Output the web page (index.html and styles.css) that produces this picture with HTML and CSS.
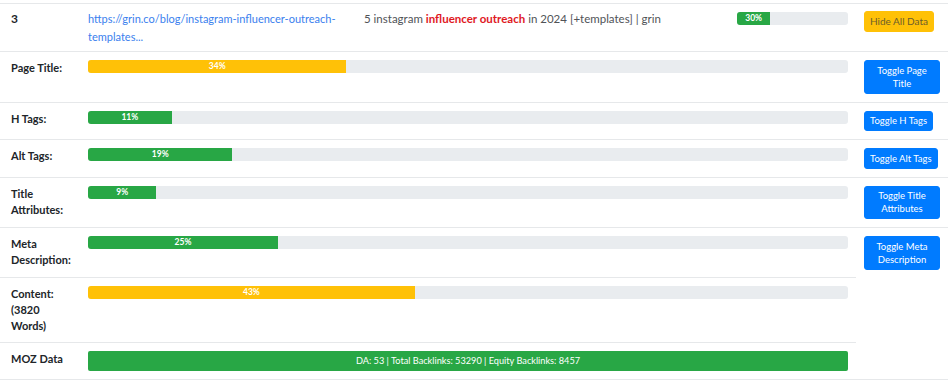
FILE: index.html
```html
<!DOCTYPE html>
<html lang="en">
    <head>
        <meta charset="UTF-8">
        <meta name="viewport" content="width=device-width, initial-scale=1.0">
        <title>Page audit</title>
        <link rel="stylesheet" href="styles.css">
    </head>
    <body>
        <div class="wrap">
            <table class="audit">
                <colgroup>
                    <col class="c-num">
                    <col class="c-url">
                    <col class="c-title">
                    <col class="c-score">
                    <col class="c-act">
                </colgroup>
                <tr class="result">
                    <td class="num">3</td>
                    <td><a class="url" href="#">https://grin.co/blog/instagram-influencer-outreach-templates...</a></td>
                    <td class="title">5 instagram <b>influencer outreach</b> in 2024 [+templates] | grin</td>
                    <td><div class="track"><div class="fill ok" style="width:30%">30%</div></div></td>
                    <td><button class="btn btn-warn">Hide All Data</button></td>
                </tr>
                <tr>
                    <th>Page Title:</th>
                    <td colspan="3"><div class="track"><div class="fill warn" style="width:34%">34%</div></div></td>
                    <td><button class="btn">Toggle Page Title</button></td>
                </tr>
                <tr>
                    <th>H Tags:</th>
                    <td colspan="3"><div class="track"><div class="fill ok" style="width:11%">11%</div></div></td>
                    <td><button class="btn">Toggle H Tags</button></td>
                </tr>
                <tr>
                    <th>Alt Tags:</th>
                    <td colspan="3"><div class="track"><div class="fill ok" style="width:19%">19%</div></div></td>
                    <td><button class="btn">Toggle Alt Tags</button></td>
                </tr>
                <tr>
                    <th>Title Attributes:</th>
                    <td colspan="3"><div class="track"><div class="fill ok" style="width:9%">9%</div></div></td>
                    <td><button class="btn">Toggle Title Attributes</button></td>
                </tr>
                <tr>
                    <th>Meta Description:</th>
                    <td colspan="3"><div class="track"><div class="fill ok" style="width:25%">25%</div></div></td>
                    <td><button class="btn">Toggle Meta Description</button></td>
                </tr>
                <tr>
                    <th>Content: (3820 Words)</th>
                    <td colspan="3"><div class="track"><div class="fill warn" style="width:43%">43%</div></div></td>
                </tr>
                <tr>
                    <th>MOZ Data</th>
                    <td colspan="3"><div class="moz">DA: 53 | Total Backlinks: 53290 | Equity Backlinks: 8457</div></td>
                </tr>
            </table>
        </div>
    </body>
</html>
```

FILE: styles.css
```css
body {
    margin: 0;
    font-family: Lato, "Noto Sans", sans-serif;
    color: #212529;
    background-color: #fff;
}
.wrap {
    padding-top: 3px;
}
.audit {
    width: 948px;
    table-layout: fixed;
    border-collapse: collapse;
    border-bottom: 1px solid #e6e8ea;
}
.c-num { width: 80px; }
.c-url { width: 276px; }
.c-title { width: 373px; }
.c-score { width: 127px; }
.c-act { width: 92px; }

.audit td,
.audit th {
    border-top: 1px solid #e6e8ea;
    padding: 8px 8px;
    vertical-align: top;
    text-align: left;
}
.audit th {
    padding-left: 11px;
    font-size: 11px;
    font-weight: 700;
    line-height: 16px;
}

/* first row: the search result */
.result td {
    padding-top: 6px;
    padding-bottom: 5px;
    font-size: 11px;
    line-height: 18px;
}
.result .num {
    padding-left: 11px;
    font-size: 12px;
    font-weight: 700;
}
.url {
    color: #3a80ee;
    text-decoration: none;
}
.result .title {
    font-size: 11.5px;
    color: #505357;
}
.title b {
    color: #e0191f;
}
.result .track {
    margin-top: 2px;
}

/* progress bars */
.track {
    height: 13px;
    background-color: #e9ecef;
    border-radius: 3px;
    overflow: hidden;
    display: flex;
}
.fill {
    height: 100%;
    color: #fff;
    font-size: 8.5px;
    font-weight: 700;
    line-height: 13px;
    text-align: center;
}
.fill.ok { background-color: #28a745; }
.fill.warn { background-color: #ffc107; }

.moz {
    height: 20px;
    line-height: 20px;
    background-color: #28a745;
    border-radius: 2px;
    color: #fff;
    font-size: 9.2px;
    text-align: center;
}

/* buttons */
.btn {
    display: block;
    box-sizing: border-box;
    font-family: inherit;
    font-size: 9.5px;
    line-height: 13px;
    padding: 2.75px 5px;
    border: 1px solid #007bff;
    border-radius: 3px;
    background-color: #007bff;
    color: #fff;
    cursor: pointer;
    max-width: 77px;
    text-align: center;
}
.btn-warn {
    font-size: 10px;
    background-color: #ffc107;
    border-color: #ffc107;
    color: #6b5d2c;
    max-width: none;
    margin-top: 1px;
}
```
